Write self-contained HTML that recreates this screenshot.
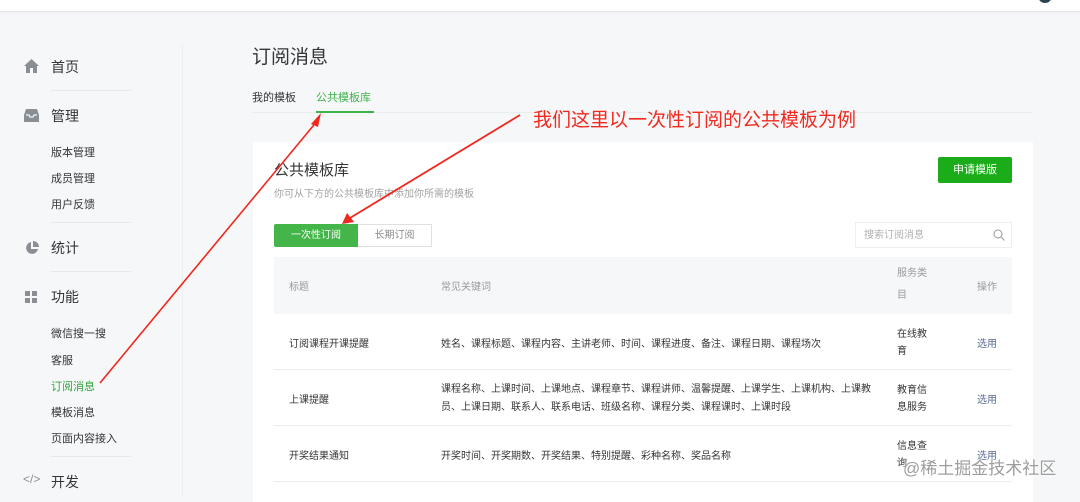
<!DOCTYPE html>
<html><head><meta charset="utf-8"><style>
*{margin:0;padding:0;box-sizing:border-box}
body{width:1080px;height:495px;overflow:hidden;background:#f6f7f9;font-family:"Liberation Sans","Noto Sans CJK SC",sans-serif;color:#353535;position:relative}
.top{position:absolute;left:0;top:0;width:1080px;height:12px;background:#fff;border-bottom:1px solid #e4e6e8;box-shadow:0 1px 2px rgba(0,0,0,.04)}
.abs{position:absolute;white-space:nowrap}
.m{font-size:14px;color:#353535}
.s{font-size:11px;color:#353535}
.hr{position:absolute;left:51px;width:80px;height:1px;background:#e7e8ea}
.vline{position:absolute;left:182px;top:44px;width:1px;height:451px;background:#eceef0}
.card{position:absolute;left:253px;top:142px;width:780px;height:360px;background:#fff}
.t{font-size:10px;color:#353535}
.g{color:#9a9a9a}
.rowline{position:absolute;left:274px;width:738px;height:1px;background:#ececec}
</style></head><body>
<div class="top"></div>
<div class="abs" style="left:1038px;top:-6px;width:14px;height:9px;border-radius:0 0 7px 7px;background:#2b4450"></div>

<svg class="abs" style="left:24px;top:59px" width="15" height="14" viewBox="0 0 15 14"><path d="M7.5 0 L15 7 L13 7 L13 14 L9 14 L9 9 L6 9 L6 14 L2 14 L2 7 L0 7Z" fill="#8a8f96"/></svg>
<div class="abs m" style="left:51px;top:57px">首页</div>
<div class="hr" style="top:90px"></div>
<svg class="abs" style="left:24px;top:109px" width="15" height="13" viewBox="0 0 15 13"><path d="M2 0 H13 L15 6 V13 H0 V6Z" fill="#8a8f96"/><path d="M2 6 H5 L6 8 H9 L10 6 H13" stroke="#f6f7f9" stroke-width="1.2" fill="none"/></svg>
<div class="abs m" style="left:51px;top:106px">管理</div>
<div class="abs s" style="left:51px;top:144px">版本管理</div>
<div class="abs s" style="left:51px;top:170px">成员管理</div>
<div class="abs s" style="left:51px;top:196px">用户反馈</div>
<div class="hr" style="top:222px"></div>
<svg class="abs" style="left:25px;top:241px" width="14" height="14" viewBox="0 0 14 14"><path d="M6 1 A6 6 0 1 0 13 8 L6 8Z" fill="#8a8f96"/><path d="M8 0 A6 6 0 0 1 14 6 L8 6Z" fill="#8a8f96"/></svg>
<div class="abs m" style="left:51px;top:238px">统计</div>
<div class="hr" style="top:271px"></div>
<svg class="abs" style="left:25px;top:291px" width="13" height="12" viewBox="0 0 13 12"><rect x="0" y="0" width="5" height="5" fill="#8a8f96"/><rect x="7" y="0" width="5" height="5" fill="#8a8f96"/><rect x="0" y="7" width="5" height="5" fill="#8a8f96"/><rect x="7" y="7" width="5" height="5" fill="#8a8f96"/></svg>
<div class="abs m" style="left:51px;top:287px">功能</div>
<div class="abs s" style="left:51px;top:325px">微信搜一搜</div>
<div class="abs s" style="left:51px;top:352px">客服</div>
<div class="abs s" style="left:51px;top:378px;color:#33a33b">订阅消息</div>
<div class="abs s" style="left:51px;top:404px">模板消息</div>
<div class="abs s" style="left:51px;top:430px">页面内容接入</div>
<div class="hr" style="top:456px"></div>
<div class="abs" style="left:23px;top:472px;font-size:12px;color:#8a8f96">&lt;/&gt;</div>
<div class="abs m" style="left:51px;top:472px">开发</div>
<div class="vline"></div>

<div class="abs" style="left:252px;top:42px;font-size:19px;color:#353535">订阅消息</div>
<div class="abs" style="left:252px;top:89px;font-size:11px">我的模板</div>
<div class="abs" style="left:316px;top:89px;font-size:11px;color:#3fb34b">公共模板库</div>
<div class="abs" style="left:252px;top:112px;width:780px;height:1px;background:#eaecee"></div>
<div class="abs" style="left:316px;top:111px;width:58px;height:2px;background:#3fb34b"></div>

<div class="card"></div>
<div class="abs" style="left:274px;top:159px;font-size:15px">公共模板库</div>
<div class="abs" style="left:274px;top:185px;font-size:10px;color:#a3a3a3">你可从下方的公共模板库中添加你所需的模板</div>
<div class="abs" style="left:938px;top:157px;width:74px;height:26px;background:#1aad19;border-radius:2px;color:#fff;font-size:11px;text-align:center;line-height:26px">申请模版</div>

<div class="abs" style="left:274px;top:224px;width:84px;height:23px;background:#44b549;color:#fff;font-size:10px;text-align:center;line-height:23px;border-radius:2px 0 0 2px">一次性订阅</div>
<div class="abs" style="left:358px;top:224px;width:74px;height:23px;border:1px solid #e0e0e0;border-left:none;color:#8a8a8a;font-size:10px;text-align:center;line-height:21px">长期订阅</div>
<div class="abs" style="left:855px;top:222px;width:157px;height:26px;border:1px solid #eceef0;font-size:10px;color:#b0b0b0;line-height:25px;padding-left:8px">搜索订阅消息</div>
<svg class="abs" style="left:993px;top:229px" width="12" height="12" viewBox="0 0 12 12"><circle cx="5" cy="5" r="4" stroke="#999" stroke-width="1" fill="none"/><path d="M8 8 L11.5 11.5" stroke="#999"/></svg>

<div class="abs" style="left:274px;top:257px;width:738px;height:57px;background:#f6f7f9"></div>
<div class="abs t g" style="left:289px;top:278px">标题</div>
<div class="abs t g" style="left:441px;top:278px">常见关键词</div>
<div class="abs t g" style="left:897px;top:263px;line-height:22px;white-space:normal;width:36px">服务类<br>目</div>
<div class="abs t g" style="left:977px;top:278px">操作</div>

<div class="abs t" style="left:289px;top:335px">订阅课程开课提醒</div>
<div class="abs t" style="left:441px;top:335px">姓名、课程标题、课程内容、主讲老师、时间、课程进度、备注、课程日期、课程场次</div>
<div class="abs t" style="left:897px;top:326px;line-height:17px">在线教<br>育</div>
<div class="abs t" style="left:977px;top:335px;color:#576b95">选用</div>
<div class="rowline" style="top:369px"></div>

<div class="abs t" style="left:289px;top:391px">上课提醒</div>
<div class="abs t" style="left:441px;top:381px;line-height:18px">课程名称、上课时间、上课地点、课程章节、课程讲师、温馨提醒、上课学生、上课机构、上课教<br>员、上课日期、联系人、联系电话、班级名称、课程分类、课程课时、上课时段</div>
<div class="abs t" style="left:897px;top:382px;line-height:17px">教育信<br>息服务</div>
<div class="abs t" style="left:977px;top:391px;color:#576b95">选用</div>
<div class="rowline" style="top:425px"></div>

<div class="abs t" style="left:289px;top:447px">开奖结果通知</div>
<div class="abs t" style="left:441px;top:447px">开奖时间、开奖期数、开奖结果、特别提醒、彩种名称、奖品名称</div>
<div class="abs t" style="left:897px;top:438px;line-height:17px">信息查<br>询</div>
<div class="abs t" style="left:977px;top:447px;color:#576b95">选用</div>
<div class="rowline" style="top:481px"></div>

<div class="abs" style="left:903px;top:454px;font-size:17px;color:rgba(140,140,140,.85);text-shadow:0 0 2px #fff,0 0 2px #fff">@稀土掘金技术社区</div>

<div class="abs" style="left:533px;top:105px;font-size:19px;color:#f02a1f">我们这里以一次性订阅的公共模板为例</div>
<svg class="abs" style="left:0;top:0" width="1080" height="495">
<path d="M100 383 L318 120" stroke="#f0281e" stroke-width="1.6" fill="none"/>
<path d="M321 113 L311 124 L318 127Z" fill="#f0281e"/>
<path d="M520 115 L350 218" stroke="#f0281e" stroke-width="1.8" fill="none"/>
<path d="M342 224 L347 213 L354 222Z" fill="#f0281e"/>
</svg>
</body></html>
